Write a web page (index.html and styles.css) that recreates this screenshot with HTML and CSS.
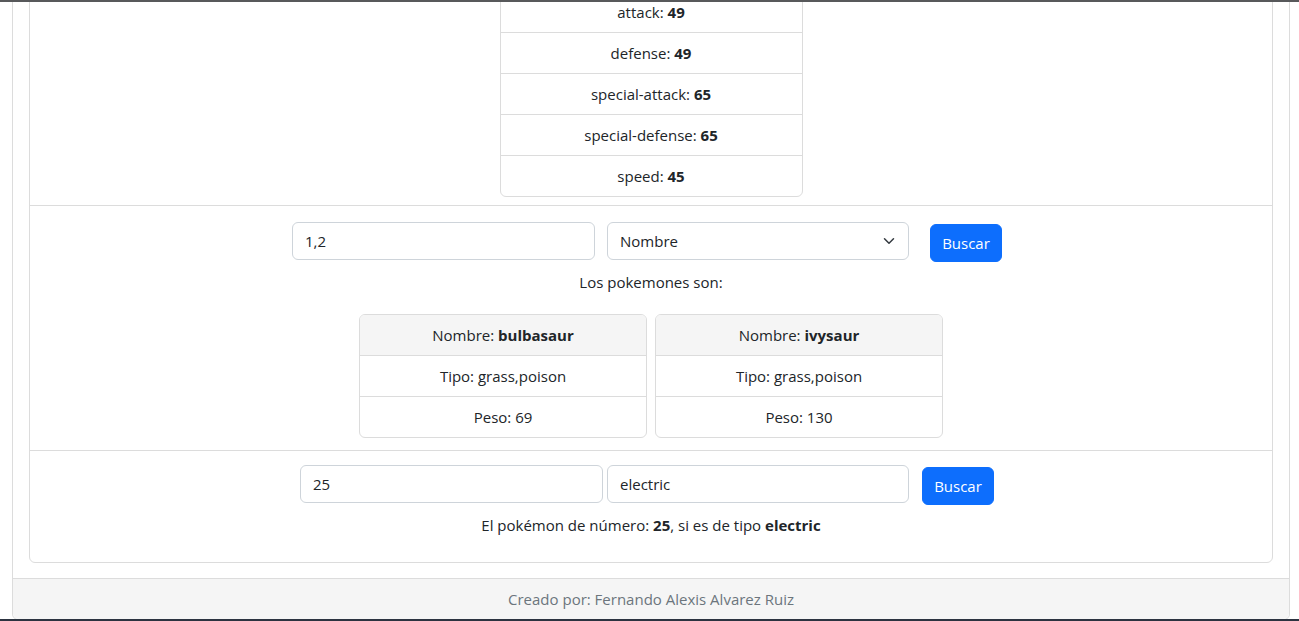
FILE: index.html
```html
<!DOCTYPE html>
<html lang="es">
<head>
<meta charset="utf-8">
<title>Pokemones</title>
<link rel="stylesheet" href="styles.css">
</head>
<body>
<div class="chrome-top"></div>
<div class="page">
  <div class="card outer">
    <div class="outer-body">
      <div class="card inner">
        <section class="section stats-section">
          <ul class="list-group stats">
            <li class="list-item">attack: <b>49</b></li>
            <li class="list-item">defense: <b>49</b></li>
            <li class="list-item">special-attack: <b>65</b></li>
            <li class="list-item">special-defense: <b>65</b></li>
            <li class="list-item">speed: <b>45</b></li>
          </ul>
        </section>
        <section class="section search-section">
          <form class="search-row row-one">
            <input class="form-control w-first" type="text" value="1,2">
            <div class="select-wrap">
              <select class="form-select">
                <option>Nombre</option>
              </select>
              <svg class="chevron" width="16" height="12" viewBox="0 0 16 16"><path d="m2 5 6 6 6-6" fill="none" stroke="#343a40" stroke-linecap="round" stroke-linejoin="round" stroke-width="2"/></svg>
            </div>
            <button class="btn" type="button">Buscar</button>
          </form>
          <p class="caption">Los pokemones son:</p>
          <div class="poke-cards">
            <div class="poke-card">
              <div class="poke-header">Nombre: <b>bulbasaur</b></div>
              <div class="poke-item">Tipo: grass,poison</div>
              <div class="poke-item">Peso: 69</div>
            </div>
            <div class="poke-card">
              <div class="poke-header">Nombre: <b>ivysaur</b></div>
              <div class="poke-item">Tipo: grass,poison</div>
              <div class="poke-item">Peso: 130</div>
            </div>
          </div>
        </section>
        <section class="section type-section">
          <form class="search-row row-two">
            <input class="form-control w-first" type="text" value="25">
            <input class="form-control w-second" type="text" value="electric">
            <button class="btn" type="button">Buscar</button>
          </form>
          <p class="caption result">El pokémon de número: <b>25</b>, si es de tipo <b>electric</b></p>
        </section>
      </div>
    </div>
    <div class="card-footer">Creado por: Fernando Alexis Alvarez Ruiz</div>
  </div>
</div>
<div class="chrome-bottom"></div>
</body>
</html>
```
FILE: styles.css
```css
* { box-sizing: border-box; }
html, body {
  margin: 0;
  height: 621px;
  overflow: hidden;
  background: #fff;
}
body {
  font-family: "Segoe UI", "Open Sans", "Noto Sans", sans-serif;
  font-size: 15px;
  line-height: 24px;
  color: #212529;
  display: flex;
  flex-direction: column;
}
.chrome-top {
  position: fixed;
  top: 0; left: 0; right: 0;
  height: 2px;
  background: #58595b;
  z-index: 5;
}
.chrome-bottom {
  position: fixed;
  bottom: 0; left: 0; right: 0;
  height: 2px;
  background: #2c3340;
  z-index: 5;
}
.page {
  margin-top: -35px;
  padding: 0 9px 0 12px;
}
.card {
  border: 1px solid #dcdcdc;
  border-radius: 6px;
  background: #fff;
}
.outer-body {
  padding: 16px 16px 15px;
}
.section {
  border-bottom: 1px solid #dcdcdc;
  text-align: center;
}
.section:last-child { border-bottom: 0; }
.stats-section { padding: 8px 16px; }
.list-group {
  list-style: none;
  margin: 0 auto;
  padding: 0;
  width: 303px;
  border: 1px solid #dcdcdc;
  border-radius: 6px;
}
.list-item {
  padding: 8px 16px;
  border-top: 1px solid #dcdcdc;
}
.list-item:first-child { border-top: 0; }
b { font-weight: 700; }

.search-section { padding: 16px 16px 12px; }
.type-section { padding: 14px 16px 25px; }
.search-row {
  display: flex;
  justify-content: center;
  align-items: flex-start;
  padding-right: 8px;
  margin: 0;
}
.form-control, .form-select {
  font: inherit;
  color: #212529;
  height: 38px;
  padding: 6px 12px;
  border: 1px solid #ced4da;
  border-radius: 6px;
  background: #fff;
}
.w-first { width: 303px; }
.w-second { width: 302px; }
.row-one .w-first { margin-right: 12px; }
.row-two .w-first { margin-right: 4px; }
.select-wrap {
  position: relative;
  width: 302px;
}
.form-select {
  width: 100%;
  appearance: none;
  -webkit-appearance: none;
  padding-right: 36px;
}
.chevron {
  position: absolute;
  right: 12px;
  top: 13px;
  pointer-events: none;
}
.btn {
  font: inherit;
  height: 38px;
  width: 72px;
  margin-top: 2px;
  padding: 6px 0;
  color: #fff;
  background: #0d6efd;
  border: 1px solid #0d6efd;
  border-radius: 6px;
}
.row-one .btn { margin-left: 21px; }
.row-two .btn { margin-left: 13px; }
.caption {
  margin: 8px 0 0;
}
.result { margin-top: 8px; }
.poke-cards {
  display: flex;
  justify-content: center;
  gap: 8px;
  margin-top: 20px;
}
.poke-card {
  width: 288px;
  border: 1px solid #dcdcdc;
  border-radius: 6px;
  overflow: hidden;
}
.poke-header {
  padding: 8px 16px;
  background: #f5f5f5;
  border-bottom: 1px solid #dcdcdc;
}
.poke-item {
  padding: 8px 16px;
  border-bottom: 1px solid #dcdcdc;
}
.poke-item:last-child { border-bottom: 0; }
.card-footer {
  padding: 8px 16px;
  text-align: center;
  color: #6c757d;
  background: #f5f5f5;
  border-top: 1px solid #dcdcdc;
  border-radius: 0 0 6px 6px;
}
```
